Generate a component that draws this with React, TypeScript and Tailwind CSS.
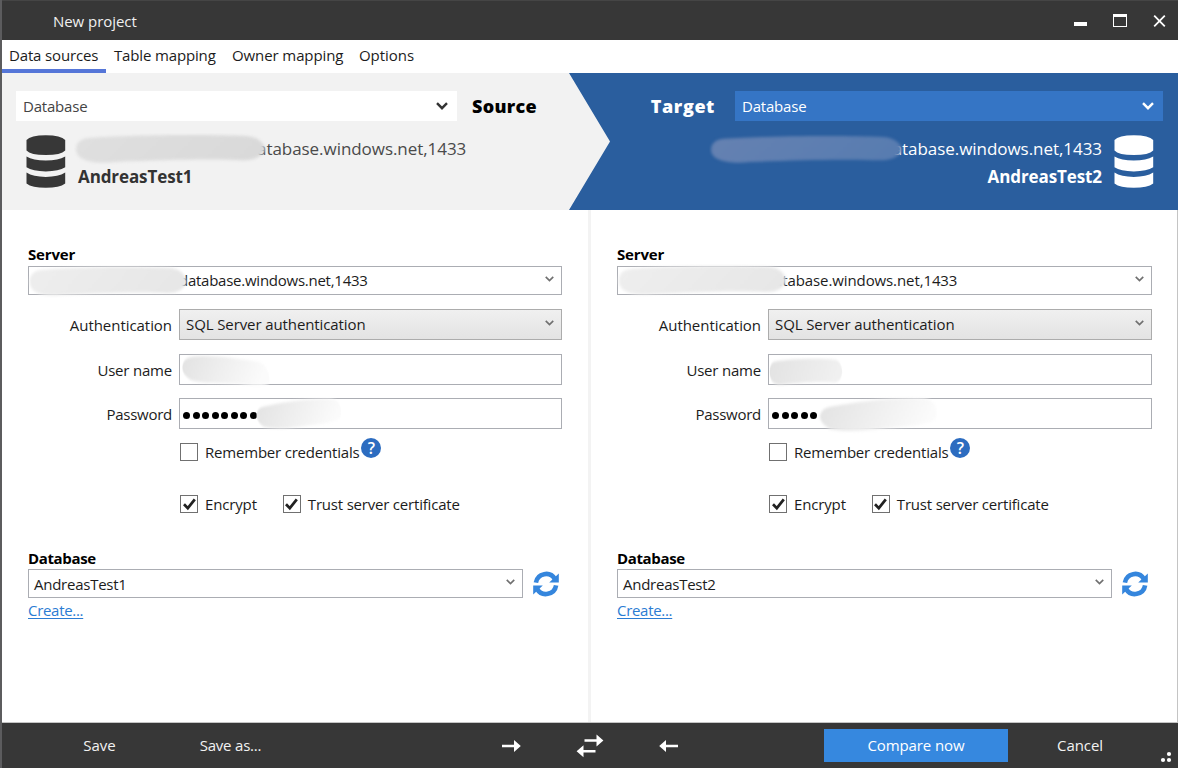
import React from "react";

function DatabaseIcon({ className }: { className: string }) {
  return (
    <svg className={className} viewBox="0 0 40 53" fill="currentColor">
      <path d="M0.5 5 Q4.5 0.3 19.8 0.3 Q35 0.3 39.2 5 V15.5 Q35 20 19.8 20 Q4.5 20 0.5 15.5Z" />
      <path d="M0.5 21.4 Q7 25.5 19.8 25.5 Q32.5 25.5 39.2 21.4 V32.3 Q33 36.4 19.8 36.4 Q6.5 36.4 0.5 32.3Z" />
      <path d="M0.5 37.5 Q7 41.9 19.8 41.9 Q32.5 41.9 39.2 37.5 V48.5 Q33.5 52.8 19.8 52.8 Q6 52.8 0.5 48.5Z" />
    </svg>
  );
}

function Chevron({ className, thick }: { className: string; thick?: boolean }) {
  return (
    <svg className={className} viewBox="0 0 12 8" fill="none" stroke="currentColor" strokeWidth={thick ? 2.4 : 2.2}>
      <path d="M1 1.2 L6 6.2 L11 1.2" />
    </svg>
  );
}

function RefreshIcon() {
  return (
    <svg className="mt-[1px] h-[26px] w-[26px] shrink-0 text-[#3586dd]" viewBox="0 0 26 26">
      <g fill="none" stroke="currentColor" strokeWidth="4.6">
        <path d="M2.9 11.6 A10.3 10.3 0 0 1 21.9 8" />
        <path d="M23.1 14.4 A10.3 10.3 0 0 1 4.1 18" />
      </g>
      <path d="M25.8 2.5 V11.6 H16.2Z" fill="currentColor" />
      <path d="M0.2 23.5 V14.4 H9.8Z" fill="currentColor" />
    </svg>
  );
}

function Smudge({ className, d, from, to, id }: { className: string; d: string; from: string; to: string; id: string }) {
  return (
    <svg className={className} viewBox="0 0 190 32" preserveAspectRatio="none">
      <defs>
        <linearGradient id={id} x1="0" x2="1" y1="0" y2="0.15">
          <stop offset="0" stopColor={from} />
          <stop offset="1" stopColor={to} />
        </linearGradient>
        <filter id={`${id}-soft`} x="-10%" y="-20%" width="120%" height="140%" colorInterpolationFilters="sRGB">
          <feGaussianBlur stdDeviation="1.5" />
        </filter>
      </defs>
      <path d={d} fill={`url(#${id})`} filter={`url(#${id}-soft)`} />
    </svg>
  );
}

const longSmudge =
  "M14 5 C50 2 130 1 170 3 C182 4 188 11 188 17 C184 25 176 28 160 27 C120 26 90 27 40 29 C20 31 3 28 2 17 C2 10 6 6 14 5Z";
const shortSmudge =
  "M20 3 C60 0 110 4 160 7 C180 9 187 17 187 27 C178 31 150 30 120 28 C80 27 50 28 24 25 C10 22 2 17 3 12 C4 7 10 4 20 3Z";
const risingSmudge =
  "M20 9 C60 5 110 1 165 2 C185 3 188 11 185 18 C180 24 145 25 110 27 C80 29 50 31 20 28 C8 25 3 20 3 17 C5 12 10 10 20 9Z";

function Checkbox({ label, checked, labelClass }: { label: string; checked?: boolean; labelClass: string }) {
  return (
    <div className="flex h-[20px] items-center gap-[7px]">
      <span className="flex size-[18px] items-center justify-center border-[1.5px] border-[#707070] bg-white">
        {checked && (
          <svg className="h-[13px] w-[13px]" viewBox="0 0 13 13" fill="none" stroke="#212121" strokeWidth="2.7">
            <path d="M1 6.3 L4.8 10.2 L11.8 1.3" />
          </svg>
        )}
      </span>
      <span className={labelClass}>{label}</span>
    </div>
  );
}

function FieldRow({ label, labelClass, children }: { label: string; labelClass: string; children: React.ReactNode }) {
  return (
    <div className="flex h-[31px] items-center">
      <div className={`w-[144px] text-right ${labelClass}`}>{label}</div>
      <div className="ml-[7px] h-[31px] flex-1">{children}</div>
    </div>
  );
}

function ConnectionForm({ side, server, database }: { side: "source" | "target"; server: string; database: string }) {
  const source = side === "source";
  return (
    <div className={source ? "w-[534px]" : "w-[535px]"}>
      <div className="h-[23px] text-[15px] leading-[22px] font-bold tracking-[-0.15px] text-black">Server</div>
      <div className="relative flex h-[29px] items-center border-[1.5px] border-[#abadb3] pr-[7px]">
        <span className={source ? "ml-[150px] flex-1 pb-[2px] tracking-[-0.25px]" : "ml-[156px] flex-1 pb-[2px] tracking-[-0.1px]"}>{server}</span>
        <Chevron className="mb-[3px] h-[6px] w-[9px] text-[#707070]" />
        <Smudge
          id={`${side}-server`}
          className={source ? "absolute top-[-2px] left-[-1px] h-[33px] w-[160px]" : "absolute top-[-3px] left-[-1px] h-[33px] w-[171px]"}
          d={longSmudge}
          from="#eeeeee"
          to="#e7e7e7"
        />
      </div>

      <div className="mt-[14px] flex flex-col gap-[13.5px]">
        <FieldRow label="Authentication" labelClass="tracking-[-0.05px] pt-[1px]">
          <div className="flex h-full items-center border-[1.5px] border-[#acacac] bg-linear-to-b from-[#f0f0f0] to-[#e3e3e3] pr-[7px] pl-[6px]">
            <span className="flex-1 pb-[1px] tracking-[-0.1px]">SQL Server authentication</span>
            <Chevron className="mb-[3px] h-[6px] w-[9px] text-[#707070]" />
          </div>
        </FieldRow>
        <FieldRow label="User name" labelClass="tracking-[-0.2px] pt-[1px]">
          <div className="relative h-full border-[1.5px] border-[#abadb3]">
            <Smudge
              id={`${side}-user`}
              className={source ? "absolute top-[-1px] left-[1px] h-[34px] w-[90px]" : "absolute top-[2px] left-[0px] h-[30px] w-[74px]"}
              d={source ? shortSmudge : longSmudge}
              from="#e2e2e2"
              to={source ? "#fbfbfb" : "#f0f0f0"}
            />
          </div>
        </FieldRow>
        <FieldRow label="Password" labelClass="tracking-[-0.25px] pt-[1px]">
          <div className="relative flex h-full items-center border-[1.5px] border-[#abadb3] pl-[3px]">
            <span className="flex gap-[2.5px] pt-[3px]">
              {Array.from({ length: source ? 8 : 5 }, (_, i) => (
                <span key={i} className="size-[7px] rounded-full bg-black" />
              ))}
            </span>
            <Smudge
              id={`${side}-password`}
              className={source ? "absolute top-[-2px] left-[75px] h-[34px] w-[88px]" : "absolute top-[-3px] left-[49px] h-[38px] w-[121px]"}
              d={risingSmudge}
              from="#e2e2e2"
              to="#fbfbfb"
            />
          </div>
        </FieldRow>
      </div>

      <div className="mt-[13px] ml-[152px] flex h-[20px] items-center">
        <Checkbox label="Remember credentials" labelClass="tracking-[-0.2px]" />
        <span className="mb-[9px] ml-[2px] flex size-[20px] items-center justify-center rounded-full bg-[#2c6cc0] text-[16px] leading-[20px] font-semibold text-white">
          ?
        </span>
      </div>
      <div className="mt-[32px] ml-[152px] flex h-[20px] gap-[26px]">
        <Checkbox checked label="Encrypt" labelClass="tracking-[-0.15px]" />
        <Checkbox checked label="Trust server certificate" labelClass="tracking-[-0.2px]" />
      </div>

      <div className="mt-[32px] h-[23px] pt-[1px] text-[15px] leading-[22px] font-bold tracking-[-0.35px] text-black">Database</div>
      <div className="flex h-[29px] items-center gap-[10px]">
        <div className="flex h-full w-[495px] items-center border-[1.5px] border-[#abadb3] pr-[7px] pl-[5px]">
          <span className="flex-1 tracking-[-0.25px]">{database}</span>
          <Chevron className="mb-[3px] h-[6px] w-[9px] text-[#707070]" />
        </div>
        <RefreshIcon />
      </div>
      <a className="mt-[1px] inline-block leading-[23px] tracking-[-0.3px] text-[#2b7cd3] underline underline-offset-[2px]">Create...</a>
    </div>
  );
}

export default function App() {
  return (
    <div className="flex h-[768px] w-[1178px] flex-col overflow-hidden border-l-2 border-[#5c5c5e] bg-white font-['Open_Sans','Noto_Sans',sans-serif] text-[15px] leading-[20px] whitespace-nowrap text-[#1c1c1c]">
      <header className="flex h-[40px] shrink-0 items-center justify-between border-t border-[#454545] bg-[#373737] pr-[12px] pl-[51px] text-white">
        <h1 className="tracking-[-0.05px] text-[#f0f0f0]">New project</h1>
        <div className="flex items-center gap-[26px]">
          <span className="mt-[7px] h-[4px] w-[13px] bg-white" />
          <span className="h-[13px] w-[14px] border-[1.5px] border-t-[3px] border-white" />
          <svg className="h-[12px] w-[13px]" viewBox="0 0 12 12" stroke="white" strokeWidth="1.8">
            <path d="M0.7 0.7 L11.3 11.3 M11.3 0.7 L0.7 11.3" />
          </svg>
        </div>
      </header>

      <nav className="flex h-[33px] shrink-0">
        <span className="w-[104px] border-b-[4px] border-[#5576d8] pt-[5px] pl-[7px] tracking-[-0.15px]">Data sources</span>
        <span className="w-[118px] pt-[5px] pl-[8px] tracking-[-0.15px]">Table mapping</span>
        <span className="w-[128px] pt-[5px] pl-[8px] tracking-[-0.1px]">Owner mapping</span>
        <span className="pt-[5px] pl-[7px] tracking-[-0.05px]">Options</span>
      </nav>

      <section className="flex h-[137px] shrink-0 bg-[#f2f2f2]">
        <div className="w-[567px] pt-[18px] pl-[14px]">
          <div className="flex items-center">
            <div className="flex h-[30px] w-[441px] items-center justify-between bg-white pr-[9px] pl-[7px] text-[#444]">
              <span className="tracking-[-0.2px]">Database</span>
              <Chevron thick className="h-[8px] w-[12px] text-[#333]" />
            </div>
            <strong className="ml-[15px] text-[18px] leading-[30px] font-extrabold tracking-[0.3px] text-black">Source</strong>
          </div>
          <div className="flex pt-[14px] pl-[10px]">
            <DatabaseIcon className="h-[53px] w-[40px] text-[#373737]" />
            <div className="relative ml-[12px]">
              <div className="pl-[179px] text-[17px] leading-[28px] tracking-[-0.05px] text-[#4a4a4a]">atabase.windows.net,1433</div>
              <div className="text-[17px] leading-[27px] font-bold tracking-[-0.1px] text-[#333]">AndreasTest1</div>
              <Smudge id="source-head" className="absolute top-[-2px] left-[-4px] h-[32px] w-[193px]" d={longSmudge} from="#dfdfdf" to="#d9d9d9" />
            </div>
          </div>
        </div>
        <div className="flex-1 bg-[#2a5e9e] pt-[18px] pr-[15px] text-white [clip-path:polygon(0_0,100%_0,100%_100%,0_100%,41px_50%)]">
          <div className="flex items-center justify-end">
            <strong className="mr-[20px] text-[18px] leading-[30px] font-extrabold tracking-[0.6px]">Target</strong>
            <div className="flex h-[30px] w-[428px] items-center justify-between bg-[#3575c5] pr-[9px] pl-[7px]">
              <span className="tracking-[-0.2px]">Database</span>
              <Chevron thick className="h-[8px] w-[12px]" />
            </div>
          </div>
          <div className="flex justify-end pt-[14px] pr-[9px]">
            <div className="relative mr-[12px] text-right">
              <div className="pl-[182px] text-[17px] leading-[28px] tracking-[-0.05px]">atabase.windows.net,1433</div>
              <div className="text-[17px] leading-[27px] font-bold tracking-[-0.1px]">AndreasTest2</div>
              <Smudge id="target-head" className="absolute top-[-1px] right-[198px] h-[31px] w-[195px]" d={longSmudge} from="#6581b1" to="#587cb0" />
            </div>
            <DatabaseIcon className="h-[53px] w-[40px] text-white" />
          </div>
        </div>
      </section>

      <main className="flex flex-1 border-r border-b border-[#c4c4c4]">
        <div className="w-[589px] border-r-[3px] border-r-[#f3f3f3] pt-[33px] pl-[26px]">
          <ConnectionForm side="source" server="database.windows.net,1433" database="AndreasTest1" />
        </div>
        <div className="flex-1 pt-[33px] pl-[26px]">
          <ConnectionForm side="target" server="atabase.windows.net,1433" database="AndreasTest2" />
        </div>
      </main>

      <footer className="flex h-[45px] shrink-0 bg-[#373737] text-[#f2f2f2]">
        <button className="w-[195px] pb-[1px] tracking-[-0.05px]">Save</button>
        <button className="w-[67px] pb-[1px] tracking-[-0.2px]">Save as...</button>
        <div className="flex flex-1 items-center pt-px pl-[238px] text-white">
          <svg className="h-[14px] w-[19px]" viewBox="0 0 19 14" fill="currentColor">
            <path d="M0 5.7 H12 V1 L18.8 7 L12 13 V8.3 H0Z" />
          </svg>
          <svg className="ml-[55px] h-[24px] w-[28px]" viewBox="0 0 28 24" fill="currentColor">
            <path d="M8.5 5.2 H20.5 V0.5 L27.4 6.5 L20.5 12.5 V7.8 H8.5Z" />
            <path d="M19.5 15.9 H7.5 V11.2 L0.6 17.2 L7.5 23.2 V18.5 H19.5Z" />
          </svg>
          <svg className="ml-[55px] h-[14px] w-[19px]" viewBox="0 0 19 14" fill="currentColor">
            <path d="M19 5.7 H7 V1 L0.2 7 L7 13 V8.3 H19Z" />
          </svg>
        </div>
        <button className="mt-[6px] h-[33px] w-[184px] bg-[#3688df] pb-[1px] tracking-[-0.1px] text-white">Compare now</button>
        <button className="w-[144px] pb-[1px] tracking-[-0.1px]">Cancel</button>
        <svg className="mt-[28px] mr-[3px] ml-[7px] h-[12px] w-[16px]" viewBox="0 0 16 12" fill="white">
          <circle cx="10" cy="3" r="2.1" />
          <circle cx="4" cy="9" r="2.1" />
          <circle cx="10" cy="9" r="2.1" />
        </svg>
      </footer>
    </div>
  );
}
